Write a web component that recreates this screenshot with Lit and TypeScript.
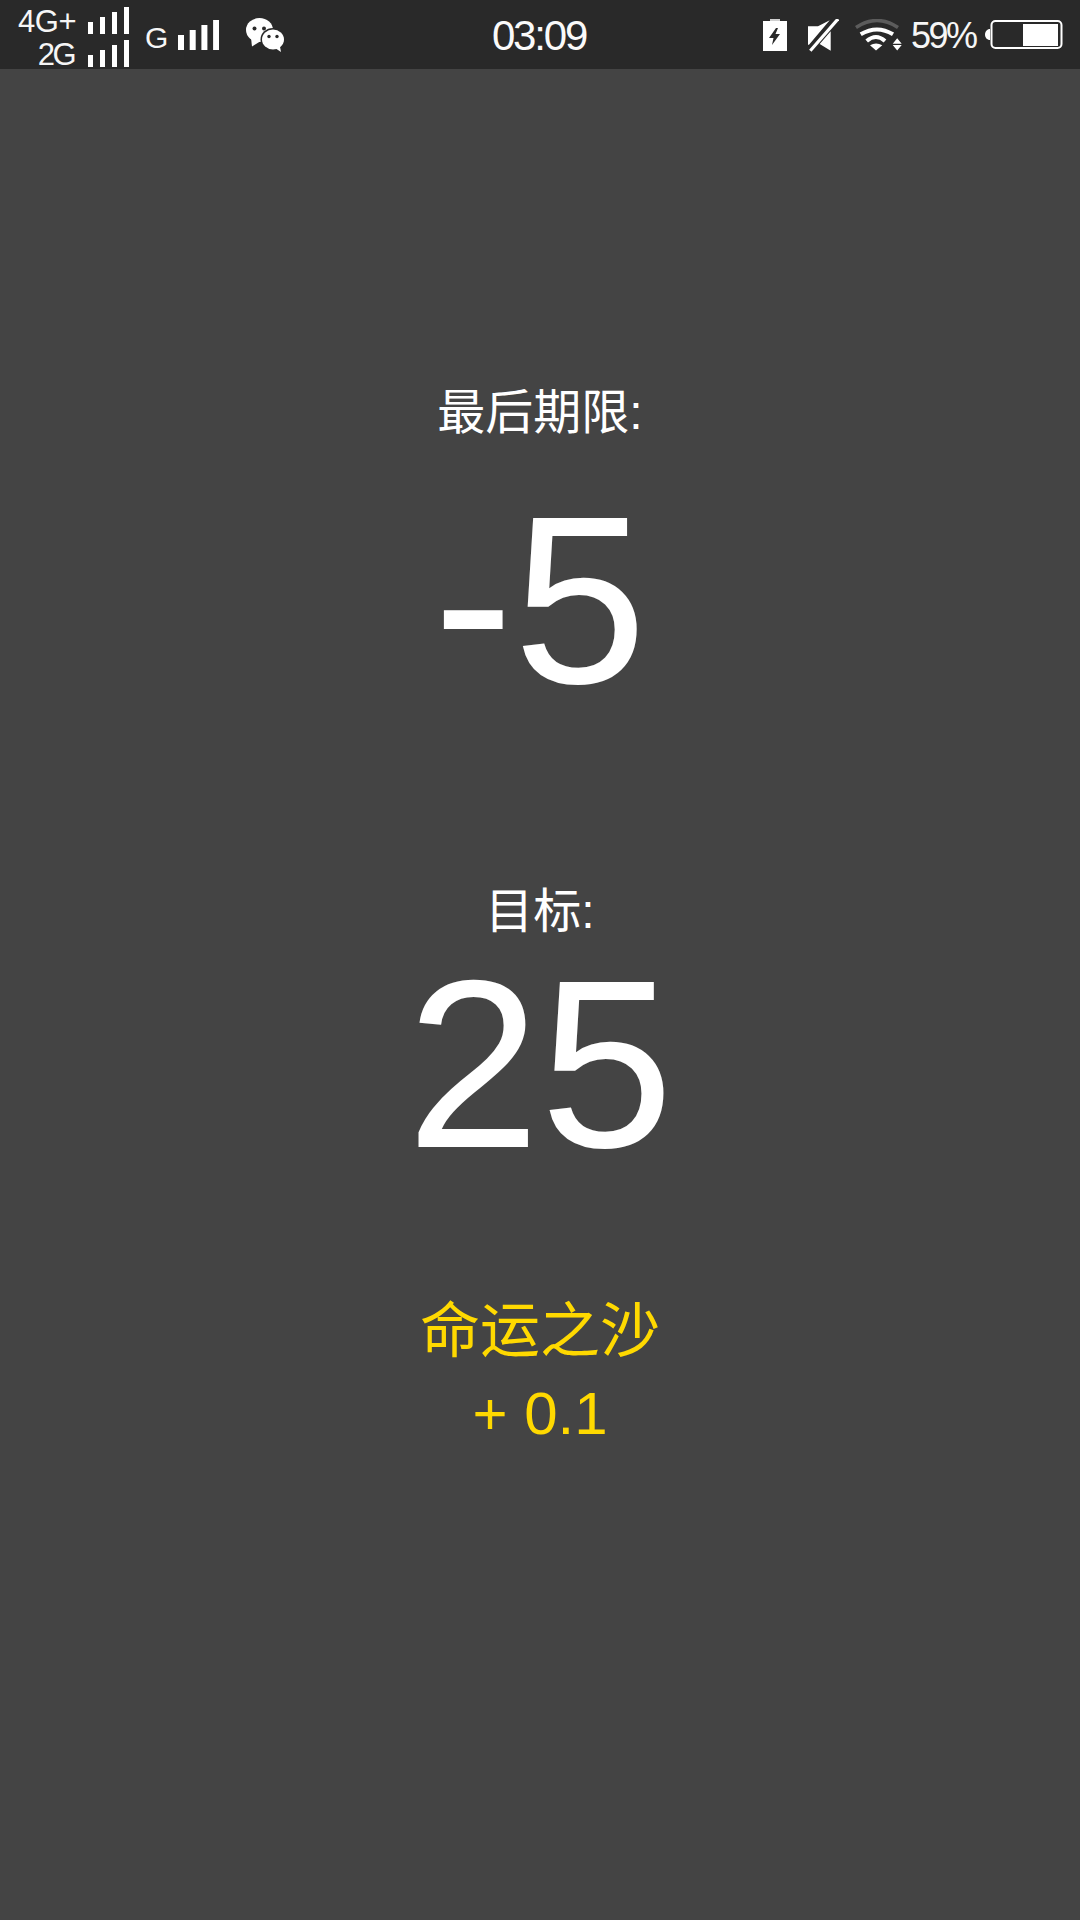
import { LitElement, html, css, svg } from "lit";
import { customElement } from "lit/decorators.js";

const bars = (hs: number[], w: number, step: number, h: number) => svg`${hs.map(
  (v, i) => svg`<rect x=${i * step} y=${h - v} width=${w} height=${v} fill="#fff"/>`
)}`;

@customElement("app-root")
export class AppRoot extends LitElement {
  static styles = css`
    :host { display: block; width: 1080px; height: 1920px; background: #444444; color: #fff;
      font-family: "Liberation Sans", "Noto Sans CJK SC", sans-serif; overflow: hidden; }
    .status { height: 69px; background: #292929; display: grid; grid-template-columns: 1fr auto 1fr; align-items: center; }
    .left { display: flex; align-items: center; padding-left: 18px; }
    .right { display: flex; align-items: center; justify-content: flex-end; padding-right: 17px; }
    .stack { display: grid; grid-template-columns: 58px 41px; column-gap: 12px; row-gap: 6px; justify-items: end; align-items: end; margin-top: 3px; }
    .net { font-size: 31px; line-height: 30px; margin-bottom: -3px; letter-spacing: -0.5px; color: #f6f6f6; white-space: nowrap; }
    .tight { letter-spacing: -2.5px; margin-right: 2px; }
    .g { font-size: 30px; line-height: 36px; margin-top: 6px; letter-spacing: -1.3px; margin-left: 16px; color: #f6f6f6; }
    svg { display: block; flex: none; }
    .b2 { margin-left: 11px; }
    .wx { margin-left: 27px; }
    .time { font-size: 42px; letter-spacing: -2.2px; line-height: 69px; color: #fafafa; padding-right: 2px; }
    .mute { margin-left: 21px; }
    .wifi { margin-left: 16px; }
    .pct { font-size: 36px; letter-spacing: -2.5px; margin-left: 9px; color: #f6f6f6; line-height: 69px; align-self: flex-start; padding-top: 1px; }
    .batt { margin-left: 9.5px; }
    main { display: flex; flex-direction: column; align-items: center; text-align: center; }
    .label { font-size: 48px; line-height: 56px; }
    .big { font-size: 240px; line-height: 248px; }
    .l1 { margin-top: 316px; }
    .n1 { margin-top: 35px; }
    .l2 { margin-top: 160px; }
    .gold { color: #ffd900; font-size: 60px; line-height: 84px; }
    .g1 { margin-top: 103px; line-height: 81px; }
  `;

  render() {
    return html`
      <div class="status">
        <div class="left">
          <div class="stack">
            <span class="net">4G+</span>
            <svg width="41" height="27" viewBox="0 0 41 27">${bars([12, 17, 22, 27], 5, 12, 27)}</svg>
            <span class="net tight">2G</span>
            <svg width="41" height="27" viewBox="0 0 41 27">${bars([12, 17, 22, 27], 5, 12, 27)}</svg>
          </div>
          <span class="g">G</span>
          <svg class="b2" width="41" height="30" viewBox="0 0 41 30">${bars([15, 20, 25, 30], 6, 11.7, 30)}</svg>
          <svg class="wx" width="38" height="34" viewBox="0 0 38 34">
            <ellipse cx="13.500" cy="12" rx="13.500" ry="12" fill="#fff"/>
            <path fill="#fff" d="M5 20l1 8.500 8-5z"/>
            <ellipse cx="27" cy="21.500" rx="12.500" ry="11.500" fill="#292929"/>
            <ellipse cx="27" cy="21.500" rx="11" ry="10" fill="#fff"/>
            <path fill="#fff" d="M29 30l6 4-1.500-8z"/>
            <circle cx="8.500" cy="10.500" r="2" fill="#292929"/><circle cx="18" cy="10.500" r="2" fill="#292929"/>
            <circle cx="23" cy="18.500" r="1.700" fill="#292929"/><circle cx="31" cy="18.500" r="1.700" fill="#292929"/>
          </svg>
        </div>
        <div class="time">03:09</div>
        <div class="right">
          <svg width="24" height="32" viewBox="0 0 24 32">
            <path fill="#d0d0d0" d="M7 0h10v2H7z"/>
            <path fill="#fff" fill-rule="evenodd" d="M0 2h24v30H0zM13 9l-7 10h4.500L9 26l8-11h-4.500l2.500-6z"/>
          </svg>
          <svg class="mute" width="31" height="33" viewBox="0 0 31 33">
            <path fill="#fff" d="M0 7.300h10L21.700 1.300 1 25.700H0zM22.700 12.300v19.400L11.700 25z"/>
            <path stroke="#fff" stroke-width="3.200" d="M2.300 31.700 30 0"/>
          </svg>
          <svg class="wifi" width="47" height="33" viewBox="0 0 47 33">
            <path fill="none" stroke="#5c5c5c" stroke-width="3.500" d="M1 8.500Q22-5.500 43 8.500"/>
            <path fill="none" stroke="#fff" stroke-width="4" d="M5.700 15.300Q22 5.600 38 15.300M11.700 22Q21 14 30 22"/>
            <path fill="#fff" d="M15 26.300q6-3.400 12.300 0L21 31.500zM37.700 24.700l4.500-5.400 4.500 5.400zM37.700 26h9l-4.500 5.500z"/>
          </svg>
          <span class="pct">59%</span>
          <svg class="batt" width="78" height="31" viewBox="0 0 78 31">
            <path fill="#fff" d="M5 9v11C2 20 0 17.500 0 14.500S2 9 5 9z"/>
            <rect x="6.500" y="1" width="70" height="27" rx="4" fill="none" stroke="#fff" stroke-width="2"/>
            <rect x="38" y="4" width="35" height="22" fill="#fff"/>
          </svg>
        </div>
      </div>
      <main>
        <div class="label l1">最后期限:</div>
        <div class="big n1">-5</div>
        <div class="label l2">目标:</div>
        <div class="big">25</div>
        <div class="gold g1">命运之沙</div>
        <div class="gold">+ 0.1</div>
      </main>
    `;
  }
}
